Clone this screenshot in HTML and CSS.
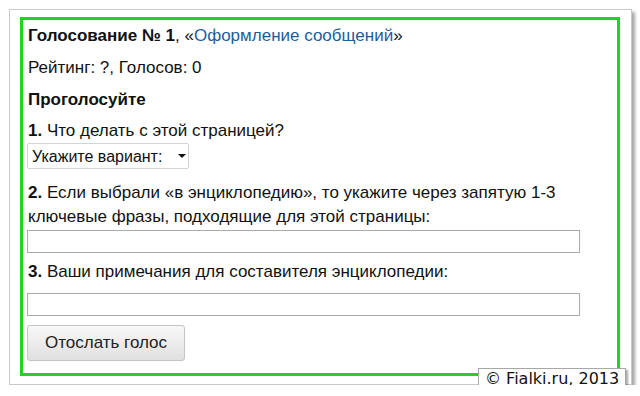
FILE: index.html
```html
<!DOCTYPE html>
<html lang="ru">
<head>
  <meta charset="UTF-8" />
  <title>Голосование</title>
  <link rel="stylesheet" href="styles.css">
</head>
<body>
  <div class="frame">
    <form class="poll">
      <p class="title"><b>Голосование № 1</b>, «<a href="#">Оформление сообщений</a>»</p>
      <p class="line">Рейтинг: ?, Голосов: 0</p>
      <p class="line"><b>Проголосуйте</b></p>

      <p class="q"><b>1.</b> Что делать с этой страницей?</p>
      <span class="pick">
        <select>
          <option>Укажите вариант:</option>
        </select>
      </span>

      <p class="q q2"><b>2.</b> Если выбрали «в энциклопедию», то укажите через запятую 1-3 ключевые фразы, подходящие для этой страницы:</p>
      <input type="text" class="field" />

      <p class="q q3"><b>3.</b> Ваши примечания для составителя энциклопедии:</p>
      <input type="text" class="field" />

      <button type="button" class="send">Отослать голос</button>
    </form>
    <div class="copy">© Fialki.ru, 2013</div>
  </div>
</body>
</html>
```

FILE: styles.css
```css
body {
  margin: 0;
  background: #fff;
  font-family: "Liberation Sans", Arial, sans-serif;
  font-size: 17px;
  color: #111;
}

.frame {
  position: relative;
  margin: 9px 0 0 9px;
  width: 602px;
  height: 362px;
  padding: 7px 9px 5px 10px;
  border: 1px solid #c9c9c9;
  box-shadow: 3px 3px 3px rgba(0, 0, 0, 0.35);
  background: #fff;
}

.poll {
  box-sizing: border-box;
  width: 600px;
  height: 359px;
  border: 3px solid #1fd41f;
  padding: 4px 5px 0 5px;
}

p { margin: 0; line-height: 24px; }
.line { margin-top: 8px; }
.q { margin-top: 7px; }
.q2 { margin-top: 12px; width: 560px; }
.q3 { margin-top: 7px; }

a { color: #1c5d9c; text-decoration: none; }

.pick {
  position: relative;
  display: inline-block;
  margin-left: -1px;
}
.pick select {
  appearance: none;
  -webkit-appearance: none;
  width: 162px;
  height: 26px;
  padding: 0 0 0 4px;
  border: 1px solid #d4d4d4;
  border-radius: 2px;
  background: #fff;
  font-family: inherit;
  font-size: 16px;
  color: #111;
}
.pick::after {
  content: "";
  position: absolute;
  right: 3px;
  top: 11px;
  border-left: 4px solid transparent;
  border-right: 4px solid transparent;
  border-top: 4px solid #111;
}

.field {
  display: block;
  box-sizing: border-box;
  width: 553px;
  height: 23px;
  margin: 1px 0 0 -1px;
  border: 1px solid #aaa;
  background: #fff;
}
.q3 + .field { margin-top: 9px; }

.send {
  display: block;
  margin: 9px 0 0 -1px;
  width: 158px;
  height: 36px;
  border: 1px solid #c4c4c4;
  border-radius: 3px;
  background: linear-gradient(#f8f8f8, #e0e0e0);
  font-family: inherit;
  font-size: 17px;
  color: #222;
}

.copy {
  position: absolute;
  left: 468px;
  top: 358px;
  padding: 1px 6px 0 6px;
  height: 19px;
  border: 1px solid #a8a8a8;
  background: #fff;
  box-shadow: 2px 2px 2px rgba(0, 0, 0, 0.35);
  font-family: "DejaVu Sans", Verdana, sans-serif;
  font-size: 16px;
  line-height: 18px;
  color: #111;
  white-space: nowrap;
}
```
